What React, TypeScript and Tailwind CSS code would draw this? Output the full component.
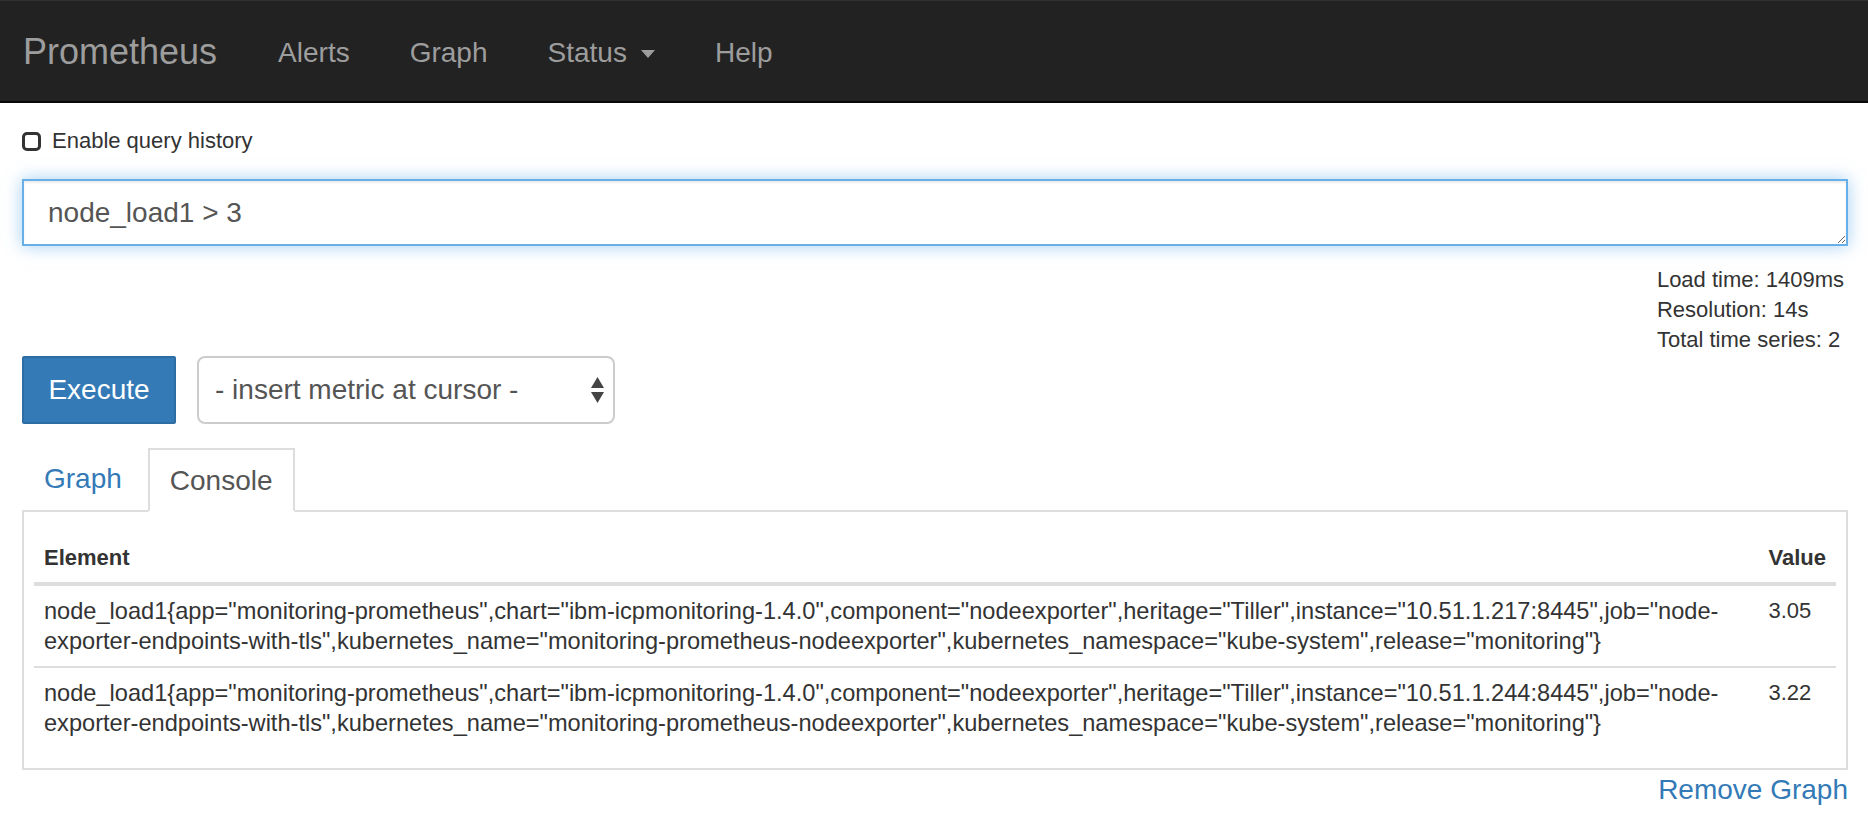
import React from "react";

const rows = [
  {
    metric:
      'node_load1{app="monitoring-prometheus",chart="ibm-icpmonitoring-1.4.0",component="nodeexporter",heritage="Tiller",instance="10.51.1.217:8445",job="node-exporter-endpoints-with-tls",kubernetes_name="monitoring-prometheus-nodeexporter",kubernetes_namespace="kube-system",release="monitoring"}',
    value: "3.05",
  },
  {
    metric:
      'node_load1{app="monitoring-prometheus",chart="ibm-icpmonitoring-1.4.0",component="nodeexporter",heritage="Tiller",instance="10.51.1.244:8445",job="node-exporter-endpoints-with-tls",kubernetes_name="monitoring-prometheus-nodeexporter",kubernetes_namespace="kube-system",release="monitoring"}',
    value: "3.22",
  },
];

function Navbar() {
  return (
    <nav className="h-[103px] bg-[#222] border-t border-t-[#303030] border-b-2 border-b-[#080808]">
      <div className="flex items-start pl-[23px] text-[#9d9d9d]">
        <a className="pt-[31px] pr-[31px] text-[36px] leading-[40px]">Prometheus</a>
        {/* nav links */}
        <a className="pt-[32px] px-[30px] text-[28px] leading-[40px]">Alerts</a>
        <a className="pt-[32px] px-[30px] text-[28px] leading-[40px]">Graph</a>
        <a className="pt-[32px] px-[30px] text-[28px] leading-[40px] flex items-center">
          Status
          <span className="ml-[14px] mt-[2px] w-0 h-0 border-l-[7.5px] border-r-[7.5px] border-t-[8px] border-l-transparent border-r-transparent border-t-[#9d9d9d]" />
        </a>
        <a className="pt-[32px] px-[30px] text-[28px] leading-[40px]">Help</a>
      </div>
    </nav>
  );
}

function SelectArrows() {
  return (
    <svg width="15" height="27" viewBox="0 0 15 27" className="shrink-0">
      <polygon points="7.5,0 14,11 1,11" fill="#444" />
      <polygon points="1,15 14,15 7.5,26" fill="#444" />
    </svg>
  );
}

export default function App() {
  return (
    <div className="min-h-screen bg-white text-[#333] font-['Liberation_Sans',Arial,sans-serif]">
      <Navbar />

      <div className="pl-[22px] pr-[20px]">
        {/* Query history toggle */}
        <div className="mt-[23px] flex items-center text-[22px] leading-[30px]">
          <div className="w-[19px] h-[19px] border-[3px] border-[#333] rounded-[5px] bg-white" />
          <span className="ml-[11px]">Enable query history</span>
        </div>

        {/* Expression input */}
        <textarea
          readOnly
          rows={1}
          value="node_load1 > 3"
          className="mt-[23px] block w-full h-[67px] border-2 border-[#66afe9] rounded-none px-[24px] pt-[12px] pb-[11px] text-[28px] leading-[40px] text-[#555] outline-none shadow-[inset_0_2px_2px_rgba(0,0,0,0.075),0_0_16px_rgba(102,175,233,0.6)]"
        />

        {/* Stats */}
        <div className="mt-[19px] flex justify-end">
          <div className="mr-[4px] text-[22px] leading-[30px]">
            <div>Load time: 1409ms</div>
            <div>Resolution: 14s</div>
            <div>Total time series: 2</div>
          </div>
        </div>

        {/* Execute row */}
        <div className="mt-[1px] flex items-center gap-[21px]">
          <button className="w-[154px] h-[68px] bg-[#337ab7] border-2 border-[#2e6da4] text-white text-[28px] leading-[40px] rounded-[2px]">
            Execute
          </button>
          <div className="w-[418px] h-[68px] border-2 border-[#ccc] rounded-[8px] bg-white flex items-center justify-between pl-[16px] pr-[8px] text-[28px] text-[#555]">
            <span>- insert metric at cursor -</span>
            <SelectArrows />
          </div>
        </div>

        {/* Tabs */}
        <div className="mt-[22px] flex items-end">
          <a className="border-2 border-transparent px-[20px] pt-[11px] pb-[9px] text-[28px] leading-[40px] text-[#337ab7]">
            Graph
          </a>
          <a className="relative z-10 -mb-[2px] ml-[4px] border-2 border-[#ddd] border-b-white bg-white px-[20px] pt-[11px] pb-[9px] text-[28px] leading-[40px] text-[#555]">
            Console
          </a>
        </div>

        {/* Console table */}
        <div className="border-2 border-[#ddd] px-[10px] pt-[21px] pb-[20px]">
          <table className="w-full border-separate border-spacing-0 text-[22px] leading-[30px]">
            <thead>
              <tr>
                <th className="text-left font-bold px-[10px] pt-[10px] pb-[9px] border-b-4 border-[#ddd]">Element</th>
                <th className="text-left font-bold px-[10px] pt-[10px] pb-[9px] border-b-4 border-[#ddd]">Value</th>
              </tr>
            </thead>
            <tbody>
              {rows.map((r, i) => (
                <tr key={i}>
                  <td
                    className={
                      i === 0
                        ? "align-top px-[10px] py-[10px] text-[23.6px] border-b-2 border-[#ddd]"
                        : "align-top px-[10px] py-[10px] text-[23.6px]"
                    }
                  >
                    {r.metric}
                  </td>
                  <td
                    className={
                      i === 0
                        ? "align-top px-[10px] py-[10px] border-b-2 border-[#ddd]"
                        : "align-top px-[10px] py-[10px]"
                    }
                  >
                    {r.value}
                  </td>
                </tr>
              ))}
            </tbody>
          </table>
        </div>

        <div className="flex justify-end">
          <a className="text-[28px] leading-[40px] text-[#337ab7]">Remove Graph</a>
        </div>
      </div>
    </div>
  );
}
